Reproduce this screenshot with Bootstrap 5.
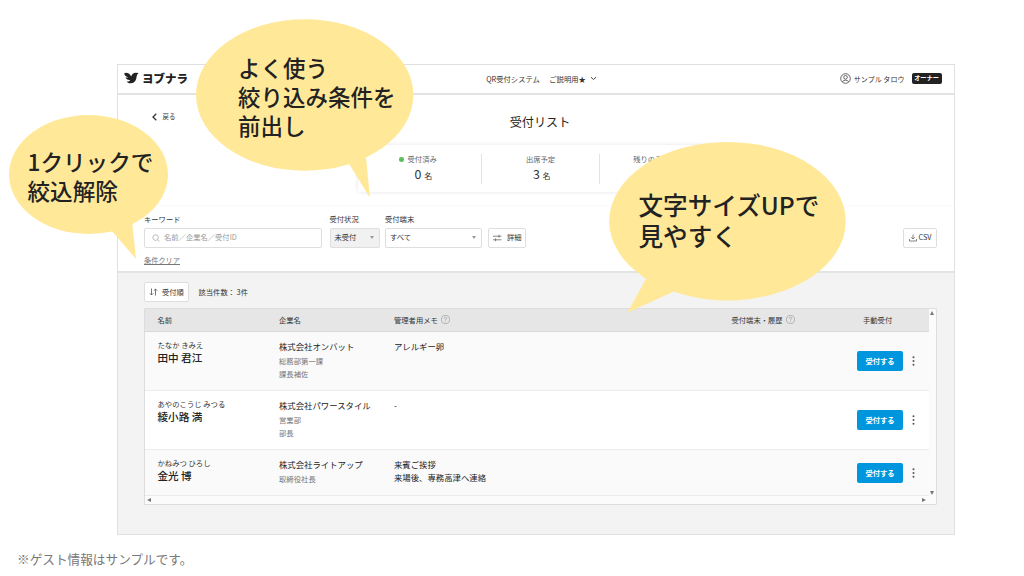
<!DOCTYPE html>
<html lang="ja">
<head>
<meta charset="utf-8">
<meta name="viewport" content="width=device-width, initial-scale=1">
<title>受付リスト</title>
<link href="https://cdn.jsdelivr.net/npm/bootstrap@5.3.0/dist/css/bootstrap.min.css" rel="stylesheet">
<style>
body{font-family:"Noto Sans CJK JP",sans-serif;color:#333;background:#fff;width:1024px;height:576px;overflow:hidden;font-size:7.3px;line-height:12px;font-weight:400;white-space:nowrap}
svg{display:block;flex:none}
.window{width:838px;height:471px;margin:63.5px 0 0 116.5px;border:1.5px solid #e0e0e0;background:#f3f3f3}
.topbar{height:30px;border-bottom:2px solid #e3e3e3;background:#fff;padding:0 12px 0 6.5px;display:grid;grid-template-columns:1fr auto 1fr}
.brand{font-size:11.5px;font-weight:900;color:#222;gap:3px;padding-bottom:2px}
.owner{background:#222;color:#fff;font-size:6.2px;font-weight:700;border-radius:2px;width:30px;height:11px;line-height:10.5px}
.headpane{height:111.5px;background:#fff;border-bottom:1px solid #fafafa}
.headpane h1{font-size:12.1px;line-height:18px;font-weight:400;margin:0;padding-top:18.5px;color:#222}
.back{height:29px;margin-bottom:-29px;padding:16px 0 0 34px;font-size:6.4px}
.stats{width:366px;height:47px;margin:14px auto 0;box-shadow:0 0 4px #0000001c;border-radius:2px;padding:9px 6px;position:relative;left:5px}
.stat{flex:1;border-right:1px solid #e3e3e3;color:#666;height:30px;line-height:11px}
.stat:last-child{border:0}
.num{font-size:12.4px;line-height:19px;color:#333;padding-left:2.5px}
.num span{font-size:8px}
.dot{width:4.5px;height:4.5px;border-radius:50%;background:#5cc05c;margin:0 4px 0 -8.5px}
.filters{height:67px;background:#fff;border-bottom:2px solid #e3e3e3;padding:7px 17px 0 26.5px}
.field{height:19.5px;border:1px solid #dedede;border-radius:2px;background:#fff;margin-top:3px;padding:0 5px 0 4px;line-height:17px}
.field.on{background:#f1f1f1}
.clear{color:#777;text-decoration:underline;margin-top:6px;font-size:7.2px}
.caret-s{border:2px solid transparent;border-top:3px solid #999;border-bottom:0}
.sortbar{padding:8.5px 0 0 26.5px;height:34.5px;gap:10px}
.sortbar .field{width:44.5px;height:20.5px;margin:0;line-height:18px}
.guest-list{margin:0 0 0 26px;width:793px;height:197px;border:1px solid #ddd;border-radius:1px;background:#fbfbfb;display:grid;grid-template-columns:784px 7px;grid-template-rows:188px 7px}
.guest{display:grid;grid-template-columns:121.5px 115px 337.5px 125.5px 1fr;padding-left:13px;border-bottom:1px solid #ebebeb;color:#333}
.guest.hd{height:23.5px;background:#e6e6e6;border-color:#d8d8d8;align-items:center;padding-bottom:.5px}
.guest.r1,.guest.r2{height:59px}.guest.r3{height:46px}
.guest.r1,.guest.r3{background:#fafafa}.guest.r2{background:#fff}
.kana{padding-top:6.5px;font-size:7.35px}
.full{font-size:10.6px;line-height:14px;font-weight:500;color:#222}
.co{font-size:8.4px;line-height:13px;padding-top:7.5px;color:#222}
.sub{color:#777;line-height:13.4px;font-size:7.35px;padding-top:1px}
.go{width:46px;height:20px;background:#0096de;color:#fff;border-radius:2px;font-weight:700;font-size:7.3px}
.tri{width:0;height:0;border:2.5px solid transparent}
.tri-u{border-bottom:4px solid #777;border-top:0;margin-top:2px}
.tri-d{border-top:4px solid #777;border-bottom:0;margin-bottom:2px}
.tri-l{border-right:4px solid #777;border-left:0;margin-left:2px}
.tri-r{border-left:4px solid #777;border-right:0;margin-right:3px}
.note{font-size:12.65px;color:#777;margin:14.5px 0 0 17px;line-height:20px}
.balloon{position:absolute;color:#222;font-weight:500}
.balloon svg{position:absolute;left:0;top:0;fill:#ffe999}
.balloon div{position:relative}
</style>
</head>
<body>
<main class="window">
  <header class="topbar align-items-center">
    <div class="brand d-flex align-items-center">
      <svg width="15" height="12" viewBox="0 0 15 12" fill="#222"><path d="M.2 1.4C1.5.4 5.4.5 7.2 4.5 8 1.7 10.5.4 12 1 13 .6 14 .8 14.6 1.6 13 1.8 12.8 3.8 12.4 6 11.8 9.5 9.2 11.6 6 11.3 4.6 11.1 3.4 10.4 2.8 9.4 4.4 9.6 5.6 9.2 6.1 8.2 3.2 8 1.8 6.4 1.6 5.2 2.6 5.5 3.6 5.5 4.2 5.2 2.2 4.8.7 3.4.2 1.4Z"/></svg>
      ヨブナラ
    </div>
    <div class="d-flex align-items-center" style="padding-left:17.5px">QR受付システム<span style="margin-left:9.5px">ご説明用★</span>
      <svg class="ms-1" width="7" height="5" fill="none" stroke="#444"><path d="M1 1.2 3.5 3.5 6 1.2"/></svg></div>
    <div class="d-flex align-items-center justify-content-end">
      <svg width="11" height="11" viewBox="0 0 11 11" fill="none" stroke="#555" stroke-width=".9"><circle cx="5.5" cy="5.5" r="4.8"/><circle cx="5.5" cy="4.3" r="1.8"/><path d="M2.2 8.7Q5.5 5.6 8.8 8.7"/></svg>
      <span style="margin:0 7px 0 3px;font-size:7.05px">サンプル タロウ</span><span class="owner text-center">オーナー</span>
    </div>
  </header>

  <section class="headpane">
    <div class="back"><div class="d-flex align-items-center" style="gap:6px"><svg width="5" height="8" fill="none" stroke="#333" stroke-width="1.3"><path d="M4.3.8 1 4 4.3 7.2"/></svg>戻る</div></div>
    <h1 class="text-center" style="padding-left:9px">受付リスト</h1>
    <div class="stats d-flex text-center">
      <div class="stat"><div class="d-flex justify-content-center align-items-center"><i class="dot"></i>受付済み</div><div class="num">0 <span>名</span></div></div>
      <div class="stat">出席予定<div class="num">3 <span>名</span></div></div>
      <div class="stat">残りの予定者数</div>
    </div>
  </section>

  <section class="filters">
    <div class="d-flex">
      <div>キーワード
        <div class="field d-flex align-items-center" style="width:178px;color:#999;padding-left:7px;gap:4px"><svg width="8" height="8" fill="none" stroke="#aaa" stroke-width=".8"><circle cx="3.6" cy="3.6" r="2.8"/><path d="m5.6 5.6 2 2"/></svg>名前／企業名／受付ID</div>
      </div>
      <div style="margin-left:7.5px">受付状況
        <div class="field on d-flex align-items-center justify-content-between" style="width:50.5px">未受付<i class="caret-s"></i></div>
      </div>
      <div style="margin-left:5px">受付端末
        <div class="field d-flex align-items-center justify-content-between" style="width:97px">すべて<i class="caret-s"></i></div>
      </div>
      <div class="field d-flex align-items-center align-self-end" style="width:38px;margin-left:6px;gap:5px"><svg width="9" height="8" fill="none" stroke="#666" stroke-width=".8"><path d="M0 2.2H8.5M0 5.8H8.5M6 .7V3.7M2.6 4.3V7.3"/></svg>詳細</div>
      <div class="field d-flex align-items-center align-self-end ms-auto" style="width:34px;gap:2px;padding-left:5px"><svg width="8" height="8" fill="none" stroke="#666" stroke-width=".8"><path d="M4 .5V5M2.2 3.3 4 5 5.8 3.3M.5 5V7H7.5V5"/></svg>CSV</div>
    </div>
    <span class="clear d-inline-block">条件クリア</span>
  </section>

  <section class="sortbar d-flex align-items-start">
    <div class="field d-flex align-items-center"><svg width="9" height="8" fill="none" stroke="#555" stroke-width=".8" style="margin-right:4px"><path d="M2.5.5V7M.8 5.3 2.5 7 4.2 5.3M6.5 7.5V1M4.8 2.7 6.5 1 8.2 2.7"/></svg>受付順</div>
    <div style="padding-top:4px">該当件数： 3件</div>
  </section>

  <section class="guest-list">
    <div>
      <div class="guest hd"><div>名前</div><div>企業名</div>
        <div class="d-flex align-items-center">管理者用メモ<svg style="margin-left:3px" width="9" height="9" viewBox="0 0 8 8" fill="none" stroke="#999" stroke-width=".6"><circle cx="4" cy="4" r="3.6"/><path d="M2.9 3.2Q3 2 4 2T5.1 3Q5.1 3.6 4 4.2V4.8M4 5.5V6.1"/></svg></div>
        <div class="d-flex align-items-center">受付端末・履歴<svg style="margin-left:3px" width="9" height="9" viewBox="0 0 8 8" fill="none" stroke="#999" stroke-width=".6"><circle cx="4" cy="4" r="3.6"/><path d="M2.9 3.2Q3 2 4 2T5.1 3Q5.1 3.6 4 4.2V4.8M4 5.5V6.1"/></svg></div>
        <div style="padding-left:6px">手動受付</div></div>
      <div class="guest r1"><div><div class="kana">たなか きみえ</div><div class="full">田中 君江</div></div>
        <div><div class="co">株式会社オンバット</div><div class="sub">総務部第一課<br>課長補佐</div></div>
        <div class="co">アレルギー卵</div><div></div>
        <div class="d-flex align-items-center" style="gap:9px"><div class="go d-flex align-items-center justify-content-center">受付する</div><svg width="3" height="10" fill="#555"><circle cx="1.5" cy="1.3" r="1"/><circle cx="1.5" cy="5" r="1"/><circle cx="1.5" cy="8.7" r="1"/></svg></div></div>
      <div class="guest r2"><div><div class="kana">あやのこうじ みつる</div><div class="full">綾小路 満</div></div>
        <div><div class="co">株式会社パワースタイル</div><div class="sub">営業部<br>部長</div></div>
        <div class="co">-</div><div></div>
        <div class="d-flex align-items-center" style="gap:9px"><div class="go d-flex align-items-center justify-content-center">受付する</div><svg width="3" height="10" fill="#555"><circle cx="1.5" cy="1.3" r="1"/><circle cx="1.5" cy="5" r="1"/><circle cx="1.5" cy="8.7" r="1"/></svg></div></div>
      <div class="guest r3"><div><div class="kana">かねみつ ひろし</div><div class="full">金光 博</div></div>
        <div><div class="co">株式会社ライトアップ</div><div class="sub">取締役社長</div></div>
        <div class="co">来賓ご挨拶<br>来場後、専務高津へ連絡</div><div></div>
        <div class="d-flex align-items-center" style="gap:9px"><div class="go d-flex align-items-center justify-content-center">受付する</div><svg width="3" height="10" fill="#555"><circle cx="1.5" cy="1.3" r="1"/><circle cx="1.5" cy="5" r="1"/><circle cx="1.5" cy="8.7" r="1"/></svg></div></div>
    </div>
    <div class="d-flex flex-column justify-content-between align-items-center"><i class="tri tri-u"></i><i class="tri tri-d"></i></div>
    <div class="d-flex justify-content-between align-items-center"><i class="tri tri-l"></i><i class="tri tri-r"></i></div>
  </section>
</main>
<p class="note">※ゲスト情報はサンプルです。</p>

<div class="balloon" style="left:9px;top:115px"><svg width="160" height="146"><ellipse cx="79.5" cy="59.5" rx="79.5" ry="59.5"/><path d="M102 115 127 144 123 106Z"/></svg><div style="padding:32px 0 0 18.5px;font-size:22.6px;line-height:29px">1クリックで<br>絞込解除</div></div>
<div class="balloon" style="left:196px;top:19px"><svg width="218" height="180"><ellipse cx="108.7" cy="76" rx="108.7" ry="75.8"/><path d="M152 143 174 179 169.8 136Z"/></svg><div style="padding:34px 0 0 42px;font-size:22.5px;line-height:29px">よく使う<br>絞り込み条件を<br>前出し</div></div>
<div class="balloon" style="left:609px;top:142px"><svg width="238" height="172"><ellipse cx="118.5" cy="79.2" rx="118.3" ry="79.2"/><path d="M38.5 134 18.5 170.5 66 149Z"/></svg><div style="padding:46.5px 0 0 29.5px;font-size:24.6px;line-height:31px">文字サイズUPで<br>見やすく</div></div>
<script src="https://cdn.jsdelivr.net/npm/bootstrap@5.3.0/dist/js/bootstrap.bundle.min.js"></script>
</body>
</html>
